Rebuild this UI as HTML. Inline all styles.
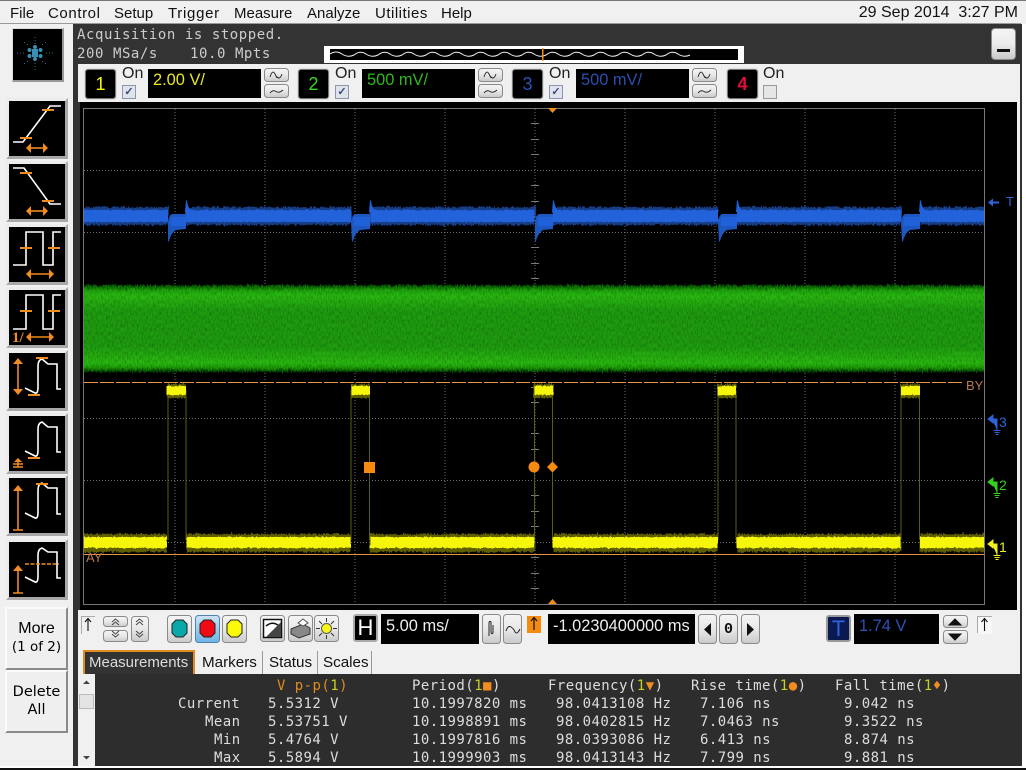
<!DOCTYPE html>
<html><head><meta charset="utf-8"><title>Scope</title>
<style>
html,body{margin:0;padding:0;background:#fff;}
body{width:1026px;height:770px;position:relative;overflow:hidden;font-family:"Liberation Sans",sans-serif;color:#000;}
.a{position:absolute;}
.t{position:absolute;white-space:pre;line-height:1;}
.m{position:absolute;white-space:pre;line-height:1;font-family:"DejaVu Sans Mono",monospace;font-size:14px;letter-spacing:.45px;color:#ddd;}
.menu{font-size:15px;top:6px;color:#111;}
.btn{position:absolute;box-sizing:border-box;border:1px solid #8a8a8a;border-radius:3px;background:linear-gradient(#f6f6f6,#e6e6e6 50%,#cfcfcf);}
.ch{position:absolute;box-sizing:border-box;width:31px;height:30px;top:69px;background:#000;border:1px solid #777;border-radius:3px;outline:1px solid #ddd;font-size:18px;line-height:28px;text-align:center;}
.val{position:absolute;top:69px;height:29px;width:113px;background:#000;font-size:16.4px;line-height:23px;padding-left:5px;box-sizing:border-box;}
.on{position:absolute;top:66px;font-size:16px;line-height:1;color:#222;}
.cb{position:absolute;top:85px;width:12px;height:12px;background:#dfe3ec;border:1px solid #8d96ad;color:#3c4a78;font-size:11px;line-height:12px;text-align:center;font-weight:bold;}
.side{position:absolute;left:6px;width:62px;height:61px;box-sizing:border-box;background:#000;border:3px solid #ececec;border-right-color:#a8a8a8;border-bottom-color:#a8a8a8;}
.side svg{position:absolute;left:0;top:0;}
.big{position:absolute;left:5px;width:63px;box-sizing:border-box;background:#efefef;border:2px solid #fafafa;border-right-color:#8a8a8a;border-bottom-color:#8a8a8a;text-align:center;font-size:16px;line-height:18px;}
.tab{position:absolute;top:651px;height:23px;font-size:15.2px;line-height:23px;color:#111;border-right:1px solid #999;box-sizing:border-box;}
</style></head><body>

<!-- backgrounds -->
<div class="a" style="left:0;top:0;width:1026px;height:770px;background:#f0f0f0"></div>
<div class="a" style="left:0;top:0;width:1026px;height:1px;background:#777"></div>
<div class="a" style="left:0;top:23px;width:1021px;height:1px;background:#999"></div>
<div class="a" style="left:73px;top:24px;width:7px;height:742px;background:#333"></div>
<div class="a" style="left:73px;top:24px;width:948px;height:40px;background:#333"></div>
<div class="a" style="left:1020px;top:24px;width:2px;height:742px;background:#333"></div>
<div class="a" style="left:1022px;top:24px;width:4px;height:744px;background:#fff"></div>
<div class="a" style="left:78px;top:64px;width:942px;height:38px;background:#f0f0f0"></div>
<div class="a" style="left:80px;top:102px;width:937px;height:508px;background:#000"></div>
<div class="a" style="left:78px;top:610px;width:942px;height:64px;background:#f0f0f0"></div>
<div class="a" style="left:78px;top:674px;width:944px;height:92px;background:#2d2d2d"></div>
<div class="a" style="left:0;top:766px;width:1026px;height:2px;background:#fff"></div>
<div class="a" style="left:0;top:768px;width:1026px;height:2px;background:#111"></div>

<!-- menu -->
<span class="t menu" style="left:10px">File</span>
<span class="t menu" style="left:48px;letter-spacing:.6px">Control</span>
<span class="t menu" style="left:114px">Setup</span>
<span class="t menu" style="left:168px;letter-spacing:.7px">Trigger</span>
<span class="t menu" style="left:234px">Measure</span>
<span class="t menu" style="left:307px">Analyze</span>
<span class="t menu" style="left:375px;letter-spacing:.5px">Utilities</span>
<span class="t menu" style="left:441px">Help</span>
<span class="t menu" style="right:8px;font-size:16px;top:5px">29 Sep 2014  3:27 PM</span>

<!-- logo -->
<div class="a" style="left:12px;top:28px;width:49px;height:51px;background:#000;border:1px solid #ddd;border-right:2px solid #999;border-bottom:2px solid #999"></div>
<svg class="a" style="left:10px;top:28px" width="52" height="52" viewBox="0 0 52 52">
<g fill="#3a8fb4"><circle cx="25" cy="25" r="2.2"/><circle cx="25" cy="19" r="2"/><circle cx="25" cy="31" r="2"/><circle cx="19.5" cy="22" r="2"/><circle cx="30.5" cy="22" r="2"/><circle cx="19.5" cy="28" r="2"/><circle cx="30.5" cy="28" r="2"/><rect x="22" y="21" width="6" height="8"/></g>
<g fill="#1f6f94"><rect x="24.5" y="9" width="1" height="1"/><rect x="24.5" y="12" width="1" height="1"/><rect x="24.5" y="15" width="1" height="1"/><rect x="24.5" y="35" width="1" height="1"/><rect x="24.5" y="38" width="1" height="1"/><rect x="24.5" y="41" width="1" height="1"/><rect x="7" y="24.5" width="1" height="1"/><rect x="10" y="24.5" width="1" height="1"/><rect x="13" y="24.5" width="1" height="1"/><rect x="36" y="24.5" width="1" height="1"/><rect x="39" y="24.5" width="1" height="1"/><rect x="42" y="24.5" width="1" height="1"/><rect x="14" y="14" width="1" height="1"/><rect x="17" y="16" width="1" height="1"/><rect x="35" y="14" width="1" height="1"/><rect x="32" y="16" width="1" height="1"/><rect x="14" y="35" width="1" height="1"/><rect x="17" y="33" width="1" height="1"/><rect x="35" y="35" width="1" height="1"/><rect x="32" y="33" width="1" height="1"/></g>
</svg>

<!-- acquisition -->
<span class="m" style="left:77px;top:28px;color:#ccc;letter-spacing:.56px">Acquisition is stopped.</span>
<span class="m" style="left:77px;top:47px;color:#ccc;letter-spacing:.56px">200 MSa/s</span>
<span class="m" style="left:190px;top:47px;color:#ccc;letter-spacing:.56px">10.0 Mpts</span>

<!-- overview -->
<svg class="a" style="left:324px;top:46px" width="420" height="17" viewBox="0 0 420 17">
<rect width="420" height="17" fill="#fff"/><rect x="6" y="3" width="408" height="11" fill="#000"/>
<path d="M6 8q6-4 12 0t12 1q6-5 12-1t12 1q6-5 12-1t12 1q6-5 12-1t12 1q6-5 12-1t12 1q6-5 12-1t12 1q6-5 12-1t12 1q6-5 12-1t12 1q6-5 12-1t12 1q6-5 12-1t12 1q6-5 12-1t12 1q6-5 12-1t12 1q6-5 12-1t12 1q6-5 12-1t12 1q6-5 12-1t12 1" fill="none" stroke="#eee" stroke-width="1"/>
<rect x="218" y="2" width="1.5" height="13" fill="#f08c10"/>
</svg>

<!-- minus button -->
<div class="btn" style="left:991px;top:28px;width:25px;height:32px;border-radius:4px;background:linear-gradient(#f4f4f4,#ececec 50%,#c8c8c8)"></div>
<div class="a" style="left:997px;top:49px;width:13px;height:3px;background:#111"></div>

<!-- channel row -->
<div class="ch" style="left:85px;color:#f5f50a">1</div>
<div class="on" style="left:122px">On</div><div class="cb" style="left:122px">✓</div>
<div class="val" style="left:148px;color:#e8e820">2.00 V/</div>
<div class="ch" style="left:298px;color:#35d820">2</div>
<div class="on" style="left:335px">On</div><div class="cb" style="left:335px">✓</div>
<div class="val" style="left:362px;color:#2fb81e">500 mV/</div>
<div class="ch" style="left:512px;color:#2a52b8">3</div>
<div class="on" style="left:549px">On</div><div class="cb" style="left:549px">✓</div>
<div class="val" style="left:576px;color:#2a4fb0">500 mV/</div>
<div class="ch" style="left:727px;color:#e0103c;font-weight:bold">4</div>
<div class="on" style="left:763px">On</div><div class="cb" style="left:763px;background:#e6e6e6;border-color:#999"></div>

<svg class="a" style="left:0;top:0" width="1026" height="110" viewBox="0 0 1026 110">
<defs>
<linearGradient id="bg" x1="0" y1="0" x2="0" y2="1"><stop offset="0" stop-color="#f5f5f5"/><stop offset=".5" stop-color="#e8e8e8"/><stop offset="1" stop-color="#c8c8c8"/></linearGradient>
<g id="wb"><rect x=".5" y=".5" width="24" height="13" rx="3" fill="url(#bg)" stroke="#8a8a8a"/><path d="M6 9q2.5-8 5-3t2 3q3 3 5-3" fill="none" stroke="#222" stroke-width=".9"/>
<rect x=".5" y="16.5" width="24" height="13" rx="3" fill="url(#bg)" stroke="#8a8a8a"/><path d="M6 25q3-3.5 6-1.5t7-1.5" fill="none" stroke="#222" stroke-width=".9"/></g>
</defs>
<use href="#wb" x="264" y="68"/><use href="#wb" x="478" y="68"/><use href="#wb" x="692" y="68"/>
</svg>

<!-- scope display -->
<svg class="a" style="left:0;top:0" width="1026" height="770" viewBox="0 0 1026 770">
<defs>
<linearGradient id="gb" x1="0" y1="0" x2="0" y2="1">
<stop offset="0" stop-color="#0c4a06"/><stop offset=".06" stop-color="#22a412"/><stop offset=".12" stop-color="#2cba16"/><stop offset=".3" stop-color="#229c12"/><stop offset=".7" stop-color="#229c12"/><stop offset=".9" stop-color="#2cba16"/><stop offset=".95" stop-color="#209c10"/><stop offset="1" stop-color="#0a3e05"/>
</linearGradient>
<filter id="rough" x="-2%" y="-30%" width="104%" height="160%">
<feTurbulence type="fractalNoise" baseFrequency="0.7 0.05" numOctaves="2" seed="3" result="n"/>
<feDisplacementMap in="SourceGraphic" in2="n" scale="5" xChannelSelector="A" yChannelSelector="G"/>
</filter>
<filter id="rough2" x="-2%" y="-30%" width="104%" height="160%">
<feTurbulence type="fractalNoise" baseFrequency="0.5 0.05" numOctaves="1" seed="9" result="n"/>
<feDisplacementMap in="SourceGraphic" in2="n" scale="3" xChannelSelector="A" yChannelSelector="G"/>
</filter>
<filter id="grain" x="0" y="-5%" width="100%" height="110%">
<feTurbulence type="fractalNoise" baseFrequency="0.8 0.25" numOctaves="2" seed="7" result="n"/>
<feDisplacementMap in="SourceGraphic" in2="n" scale="6" xChannelSelector="R" yChannelSelector="G" result="d"/>
<feColorMatrix in="n" type="matrix" values="0 0 0 0 0  0 0 0 0 0  0 0 0 0 0  1 0 0 0 -.38" result="dark"/>
<feComposite in="dark" in2="d" operator="in" result="dd"/>
<feMerge><feMergeNode in="d"/><feMergeNode in="dd"/></feMerge>
</filter>
<clipPath id="scr"><rect x="84" y="108" width="900" height="497"/></clipPath>
</defs>

<!-- graticule -->
<g stroke="#8a8a8a" stroke-width="1" stroke-dasharray="1 2" fill="none" shape-rendering="crispEdges" opacity=".8">
<path d="M175 109V604M265 109V604M355 109V604M445 109V604M625 109V604M715 109V604M805 109V604M895 109V604M535 109V604"/>
<path d="M84 170.5H984M84 232.5H984M84 294.5H984M84 356.5H984M84 418.5H984M84 480.5H984M84 542.5H984"/>
</g>
<g stroke="#7a7a7a" stroke-width="1" shape-rendering="crispEdges">
<path d="M531 123.5h8M531 139.5h8M531 154.5h8M531 185.5h8M531 201.5h8M531 216.5h8M531 247.5h8M531 263.5h8M531 278.5h8M531 309.5h8M531 325.5h8M531 340.5h8M531 371.5h8M531 387.5h8M531 402.5h8M531 433.5h8M531 449.5h8M531 464.5h8M531 495.5h8M531 511.5h8M531 526.5h8M531 557.5h8M531 573.5h8M531 588.5h8"/>
</g>
<rect x="83.5" y="108.5" width="901" height="496" fill="none" stroke="#777" shape-rendering="crispEdges"/>

<g clip-path="url(#scr)">
<!-- green -->
<rect x="70" y="285" width="930" height="87" fill="url(#gb)" filter="url(#grain)"/>

<!-- blue -->
<g fill="#133c86" filter="url(#rough)">
<path d="M70 207H168V225H70ZM186 207H351V225H186ZM370 207H535V225H370ZM553 207H718V225H553ZM737 207H901V225H737ZM920 207H1000V225H920Z"/>
</g>
<g fill="#1c58c0">
<path d="M168 222q1-7 4-8h14v15l-10 1q-5 3-7 11l-1 1z"/>
<path d="M351 222q1-7 4-8h15v15l-10 1q-5 3-7 11l-1 1z"/>
<path d="M535 222q1-7 4-8h14v15l-10 1q-5 3-7 11l-1 1z"/>
<path d="M718 222q1-7 4-8h15v15l-10 1q-5 3-7 11l-1 1z"/>
<path d="M901 222q1-7 4-8h15v15l-10 1q-5 3-7 11l-1 1z"/>
</g>
<g fill="#2060d8">
<rect x="171" y="217" width="15" height="9"/><rect x="354" y="217" width="16" height="9"/><rect x="538" y="217" width="15" height="9"/><rect x="721" y="217" width="16" height="9"/><rect x="904" y="217" width="16" height="9"/>
<path d="M185 212l1-12 1 1q1 8 6 11z"/><path d="M369 212l1-12 1 1q1 8 6 11z"/><path d="M552 212l1-12 1 1q1 8 6 11z"/><path d="M736 212l1-12 1 1q1 8 6 11z"/><path d="M919 212l1-12 1 1q1 8 6 11z"/>
</g>
<g fill="#2464dc" filter="url(#rough2)"><rect x="70" y="210" width="98" height="12"/><rect x="186" y="210" width="165" height="12"/><rect x="370" y="210" width="165" height="12"/><rect x="553" y="210" width="165" height="12"/><rect x="737" y="210" width="164" height="12"/><rect x="920" y="210" width="80" height="12"/></g>

<!-- yellow edges -->
<g stroke="#5c5c18" stroke-width="1.4" shape-rendering="crispEdges"><path d="M168 390V540M186 390V540M351 390V540M369.5 390V540M534.5 390V540M552.5 390V540M718 390V540M736 390V540M901 390V540M919.5 390V540"/></g>

<!-- yellow -->
<g fill="#5e5e06" filter="url(#rough)">
<path d="M70 534H167V552H70ZM186 534H351V552H186ZM370 534H535V552H370ZM553 534H718V552H553ZM737 534H901V552H737ZM920 534H1000V552H920Z"/>
<path d="M167 384H186V398H167ZM351 384H370V398H351ZM534 384H553V398H534ZM718 384H737V398H718ZM901 384H920V398H901Z"/>
</g>
<g fill="#f6f60a" filter="url(#rough2)"><rect x="70" y="537" width="97" height="11"/><rect x="186" y="537" width="165" height="11"/><rect x="370" y="537" width="165" height="11"/><rect x="553" y="537" width="165" height="11"/><rect x="737" y="537" width="164" height="11"/><rect x="920" y="537" width="80" height="11"/>
<rect x="167" y="386" width="19" height="9"/><rect x="351" y="386" width="19" height="9"/><rect x="534" y="386" width="19" height="9"/><rect x="718" y="386" width="19" height="9"/><rect x="901" y="386" width="19" height="9"/></g>
</g>

<!-- cursors -->
<path d="M84 382.5H963" stroke="#e8963c" stroke-width="1" stroke-dasharray="14 2" shape-rendering="crispEdges"/>
<path d="M84 554.5H984" stroke="#e8963c" stroke-width="1" shape-rendering="crispEdges"/>
<text x="966" y="390" font-family="Liberation Sans" font-size="13" fill="#b87850">BY</text>
<text x="86" y="562" font-family="Liberation Sans" font-size="13" fill="#b87850">AY</text>

<!-- markers -->
<rect x="364" y="462" width="11" height="11" fill="#f58a10"/>
<circle cx="534" cy="467" r="5.5" fill="#f58a10"/>
<path d="M552.5 461.5l5.5 5.5-5.5 5.5-5.5-5.5z" fill="#f58a10"/>
<path d="M548 108h9l-4.5 5z" fill="#f08c20"/>
<path d="M548 604h9l-4.5-5z" fill="#f08c20"/>

<!-- right labels -->
<path d="M988 202.5l5-4v3h6v2h-6v3z" fill="#2f62d8"/>
<text x="1006" y="206" font-family="Liberation Sans" font-size="13" fill="#2f62d8">T</text>
<g fill="none" stroke="#2f62d8"><path d="M988 419l5-4v8zM992 419h5v11M993.5 430.5h7M994.5 432.5h5M995.5 434.5h3" fill="#2f62d8"/></g>
<text x="999" y="427" font-family="Liberation Sans" font-size="14" fill="#2f62d8">3</text>
<g fill="none" stroke="#35d020"><path d="M988 482l5-4v8zM992 482h5v11M993.5 493.5h7M994.5 495.5h5M995.5 497.5h3" fill="#35d020"/></g>
<text x="999" y="490" font-family="Liberation Sans" font-size="14" fill="#35d020">2</text>
<g fill="none" stroke="#f0f020"><path d="M988 544l5-4v8zM992 544h5v11M993.5 555.5h7M994.5 557.5h5M995.5 559.5h3" fill="#f0f020"/></g>
<text x="999" y="552" font-family="Liberation Sans" font-size="14" fill="#f0f020">1</text>
</svg>

<!-- side buttons -->
<div class="side" style="top:98px"><svg width="56" height="55" viewBox="0 0 56 55" fill="none"><path d="M4 41H14L41 5H52" stroke="#fff" stroke-width="1.6"/><path d="M11 37H23M33 9H45" stroke="#f08c20" stroke-width="2"/><path d="M20 47H36" stroke="#f08c20" stroke-width="1.6"/><path d="M22 42l-5 5 5 5zM34 42l5 5-5 5z" fill="#f08c20"/></svg></div>
<div class="side" style="top:161px"><svg width="56" height="55" viewBox="0 0 56 55" fill="none"><path d="M4 4H15L41 40H52" stroke="#fff" stroke-width="1.6"/><path d="M11 9H23M33 37H45" stroke="#f08c20" stroke-width="2"/><path d="M20 47H36" stroke="#f08c20" stroke-width="1.6"/><path d="M22 42l-5 5 5 5zM34 42l5 5-5 5z" fill="#f08c20"/></svg></div>
<div class="side" style="top:224px"><svg width="56" height="55" viewBox="0 0 56 55" fill="none"><path d="M4 38H17V5H34V38H44V5H52" stroke="#fff" stroke-width="1.6"/><path d="M11 21H23M39 21H51" stroke="#f08c20" stroke-width="2"/><path d="M20 47H42" stroke="#f08c20" stroke-width="1.6"/><path d="M22 42l-5 5 5 5zM40 42l5 5-5 5z" fill="#f08c20"/></svg></div>
<div class="side" style="top:287px"><svg width="56" height="55" viewBox="0 0 56 55" fill="none"><path d="M4 39H17V5H34V39H44V5H52" stroke="#fff" stroke-width="1.6"/><path d="M11 21H23M39 21H51" stroke="#f08c20" stroke-width="2"/><path d="M20 47H42" stroke="#f08c20" stroke-width="1.6"/><path d="M22 42l-5 5 5 5zM40 42l5 5-5 5z" fill="#f08c20"/></svg><span class="t" style="left:3px;top:40px;font:bold 15px 'Liberation Serif',serif;color:#f08c20">1/</span></div>
<div class="side" style="top:350px"><svg width="56" height="55" viewBox="0 0 56 55" fill="none"><path d="M16 35Q22 38 26 40Q29 41 29 34V13Q29 7 33 6L39 11H48V36H52" stroke="#fff" stroke-width="1.6"/><path d="M19 42H31M27 5H39" stroke="#f08c20" stroke-width="2"/><path d="M9 9V38" stroke="#f08c20" stroke-width="1.6"/><path d="M4 11l5-6 5 6zM4 36l5 6 5-6z" fill="#f08c20"/></svg></div>
<div class="side" style="top:413px"><svg width="56" height="55" viewBox="0 0 56 55" fill="none"><path d="M16 35Q22 38 26 40Q29 41 29 34V13Q29 7 33 6L39 11H48V36H52" stroke="#fff" stroke-width="1.6"/><path d="M19 42H31" stroke="#f08c20" stroke-width="2"/><path d="M5 46l4-4 4 4z" fill="#f08c20"/><path d="M9 45V51M4 48H14M4 51H14" stroke="#f08c20" stroke-width="1.5"/></svg></div>
<div class="side" style="top:475px"><svg width="56" height="55" viewBox="0 0 56 55" fill="none"><path d="M16 35Q22 38 26 40Q29 41 29 34V12Q29 6 33 5L39 10H48V36H52" stroke="#fff" stroke-width="1.6"/><path d="M27 6H39" stroke="#f08c20" stroke-width="2"/><path d="M9 11V52M4 52H14" stroke="#f08c20" stroke-width="1.6"/><path d="M4 13l5-6 5 6z" fill="#f08c20"/></svg></div>
<div class="side" style="top:539px"><svg width="56" height="55" viewBox="0 0 56 55" fill="none"><path d="M16 35Q22 38 26 40Q29 41 29 34V13Q29 7 33 6L39 10H48V36H52" stroke="#fff" stroke-width="1.6"/><path d="M16 22H50" stroke="#f08c20" stroke-width="1.5" stroke-dasharray="4 1.5"/><path d="M9 27V51M4 51H14" stroke="#f08c20" stroke-width="1.6"/><path d="M4 29l5-6 5 6z" fill="#f08c20"/></svg></div>

<div class="big" style="top:607px;height:63px;padding-top:11px">More<br><span style="font-family:'DejaVu Sans',sans-serif;font-size:13.5px">(1 of 2)</span></div>
<div class="big" style="top:670px;height:63px;padding-top:11px;font-family:'DejaVu Sans',sans-serif;font-size:14.5px">Delete<br>All</div>

<!-- bottom controls -->
<svg class="a" style="left:0;top:610px" width="1026" height="40" viewBox="0 610 1026 40">
<defs>
<linearGradient id="b2" x1="0" y1="0" x2="0" y2="1"><stop offset="0" stop-color="#f5f5f5"/><stop offset=".5" stop-color="#e8e8e8"/><stop offset="1" stop-color="#cacaca"/></linearGradient>
<linearGradient id="blu" x1="0" y1="0" x2="0" y2="1"><stop offset="0" stop-color="#cfe4f4"/><stop offset="1" stop-color="#6fb4e4"/></linearGradient>
</defs>
<g fill="url(#b2)" stroke="#8a8a8a">
<rect x="103.5" y="616.5" width="24" height="10" rx="3"/><rect x="103.5" y="630.5" width="24" height="11" rx="3"/><rect x="131.5" y="616.5" width="17" height="25" rx="3"/>
<rect x="167.5" y="615.5" width="24" height="27" rx="3"/><rect x="222.5" y="615.5" width="24" height="27" rx="3"/>
<rect x="260.5" y="615.5" width="24" height="26" rx="3"/><rect x="288.5" y="615.5" width="24" height="26" rx="3"/><rect x="314.5" y="615.5" width="24" height="26" rx="3"/>
<rect x="482.5" y="614.5" width="18" height="29" rx="3"/><rect x="503.5" y="614.5" width="18" height="29" rx="3"/>
<rect x="698.5" y="614.5" width="18" height="29" rx="3"/><rect x="719.5" y="614.5" width="18" height="29" rx="3"/><rect x="741.5" y="614.5" width="18" height="29" rx="3"/>
<rect x="943.5" y="615.5" width="24" height="12" rx="3"/><rect x="943.5" y="630.5" width="24" height="13" rx="3"/>
</g>
<rect x="195.5" y="615.5" width="24" height="27" rx="3" fill="url(#blu)" stroke="#4a84b0"/>
<g fill="none" stroke="#444" stroke-width="1"><path d="M112 622l3.5-3 3.5 3M112 625l3.5-3 3.5 3M112 634l3.5 3 3.5-3M112 631l3.5 3 3.5-3M136 622l3.5-3 3.5 3M136 625l3.5-3 3.5 3M136 634l3.5 3 3.5-3M136 631l3.5 3 3.5-3"/></g>
<g stroke="#222"><path d="M176 620h7l4 4v9l-4 4h-7l-4-4v-9z" fill="#0aa8a8"/><path d="M204 620h7l4 4v9l-4 4h-7l-4-4v-9z" fill="#f00a14"/><path d="M231 620h7l4 4v9l-4 4h-7l-4-4v-9z" fill="#fafa0a"/></g>
<!-- misc icons -->
<rect x="263.5" y="619.5" width="18" height="18" fill="#fff" stroke="#111" stroke-width="1.5"/><path d="M281 622v15h-15z" fill="#444"/><path d="M266 626q6-5 12-1" fill="none" stroke="#111" stroke-width="1.5"/>
<path d="M291 629l12-5 7 4v6l-11 4-8-4z" fill="#888" stroke="#333"/><path d="M298 623l5-4 5 4-5 3z" fill="#fff" stroke="#555"/>
<circle cx="326.5" cy="628.5" r="5" fill="#f6f61a" stroke="#555"/><path d="M326.5 618v4M326.5 635v4M316 628.5h4M333 628.5h4M319 621l3 3M331 633l3 3M334 621l-3 3M322 633l-3 3" stroke="#333" stroke-width="1"/>
<path d="M489 636v-12q0-4 2-2v9q0 4 2 2v-8" fill="none" stroke="#222" stroke-width="1"/>
<path d="M506 631q2-6 5-4t4 5q2 3 5-3" fill="none" stroke="#222" stroke-width="1"/>
<path d="M711 623v13l-7-6.5zM747 623v13l7-6.5z" fill="#111"/>
<path d="M949 625l6-6 6 6zM949 634h12l-6 6z" fill="#111" stroke="#111"/>
<!-- small arrow boxes -->
<path d="M81.5 634V616.5H95M977.5 633V616.5H992" fill="none" stroke="#aaa"/>
<rect x="978" y="617" width="14" height="17" fill="#f8f8f8"/>
<path d="M88 631V619M85 622l3-3.5 3 3.5M984.5 631V619M981.5 622l3-3.5 3 3.5" fill="none" stroke="#111" stroke-width="1.1"/>
<rect x="527" y="616" width="14" height="17" fill="#f58a10"/>
<path d="M534 630V618M531 621l3-3.5 3 3.5" fill="none" stroke="#111" stroke-width="1.2"/>
</svg>

<div class="a" style="left:353px;top:614px;width:25px;height:28px;box-sizing:border-box;background:#000;border:2px solid #aaa;border-radius:3px;color:#fff;font-size:22px;line-height:24px;text-align:center">H</div>
<div class="a" style="left:381px;top:614px;width:98px;height:30px;background:#000;color:#eee;font-size:16.4px;line-height:25px;padding-left:5px;box-sizing:border-box">5.00 ms/</div>
<div class="a" style="left:548px;top:614px;width:147px;height:30px;background:#000;color:#eee;font-size:16.4px;line-height:25px;padding-left:5px;box-sizing:border-box">-1.0230400000 ms</div>
<div class="t" style="left:724px;top:621px;font:bold 15px 'Liberation Mono',monospace;color:#111">0</div>
<div class="a" style="left:826px;top:615px;width:25px;height:27px;box-sizing:border-box;background:#0a1a50;border:2px solid #999;border-radius:3px;color:#2f62d8;font-size:22px;line-height:23px;text-align:center">T</div>
<div class="a" style="left:854px;top:614px;width:85px;height:30px;background:#000;color:#2a52b8;font-size:16.4px;line-height:25px;padding-left:5px;box-sizing:border-box">1.74 V</div>

<!-- tabs -->
<div class="tab" style="left:83px;width:112px;height:24px;top:650px;background:#333;color:#ddd;border:2px solid #e08a20;border-bottom:none;padding-left:4px;line-height:22px;font-size:15px">Measurements</div>
<div class="tab" style="left:197px;width:66px;padding-left:5px">Markers</div>
<div class="tab" style="left:264px;width:54px;padding-left:5px">Status</div>
<div class="tab" style="left:319px;width:53px;padding-left:4px">Scales</div>

<!-- scrollbar -->
<div class="a" style="left:78px;top:674px;width:17px;height:92px;background:#f0f0f0"></div>
<div class="a" style="left:79px;top:694px;width:15px;height:15px;background:#e4e4e4;border:1px solid #bbb;box-sizing:border-box"></div>
<svg class="a" style="left:78px;top:674px" width="17" height="92"><path d="M5 10l3.5-3.5 3.5 3.5zM5 82l3.5 3.5 3.5-3.5z" fill="#444"/></svg>

<!-- measurements -->
<span class="m" style="left:277px;top:679px;color:#e08a20">V p-p(<span style="color:#c8d020">1</span>)</span>
<span class="m" style="left:412px;top:679px">Period(<span style="color:#c8d020">1</span><span style="color:#f08c20">■</span>)</span>
<span class="m" style="left:548px;top:679px">Frequency(<span style="color:#c8d020">1</span><span style="color:#f08c20">▼</span>)</span>
<span class="m" style="left:691px;top:679px">Rise time(<span style="color:#c8d020">1</span><span style="color:#f08c20">●</span>)</span>
<span class="m" style="left:835px;top:679px">Fall time(<span style="color:#c8d020">1</span><span style="color:#f08c20">♦</span>)</span>

<span class="m" style="left:178px;top:697px">Current</span><span class="m" style="left:268px;top:697px">5.5312 V</span><span class="m" style="left:412px;top:697px">10.1997820 ms</span><span class="m" style="left:556px;top:697px">98.0413108 Hz</span><span class="m" style="left:700px;top:697px">7.106 ns</span><span class="m" style="left:844px;top:697px">9.042 ns</span>
<span class="m" style="left:205px;top:715px">Mean</span><span class="m" style="left:268px;top:715px">5.53751 V</span><span class="m" style="left:412px;top:715px">10.1998891 ms</span><span class="m" style="left:556px;top:715px">98.0402815 Hz</span><span class="m" style="left:700px;top:715px">7.0463 ns</span><span class="m" style="left:844px;top:715px">9.3522 ns</span>
<span class="m" style="left:214px;top:733px">Min</span><span class="m" style="left:268px;top:733px">5.4764 V</span><span class="m" style="left:412px;top:733px">10.1997816 ms</span><span class="m" style="left:556px;top:733px">98.0393086 Hz</span><span class="m" style="left:700px;top:733px">6.413 ns</span><span class="m" style="left:844px;top:733px">8.874 ns</span>
<span class="m" style="left:214px;top:751px">Max</span><span class="m" style="left:268px;top:751px">5.5894 V</span><span class="m" style="left:412px;top:751px">10.1999903 ms</span><span class="m" style="left:556px;top:751px">98.0413143 Hz</span><span class="m" style="left:700px;top:751px">7.799 ns</span><span class="m" style="left:844px;top:751px">9.881 ns</span>

</body></html>
